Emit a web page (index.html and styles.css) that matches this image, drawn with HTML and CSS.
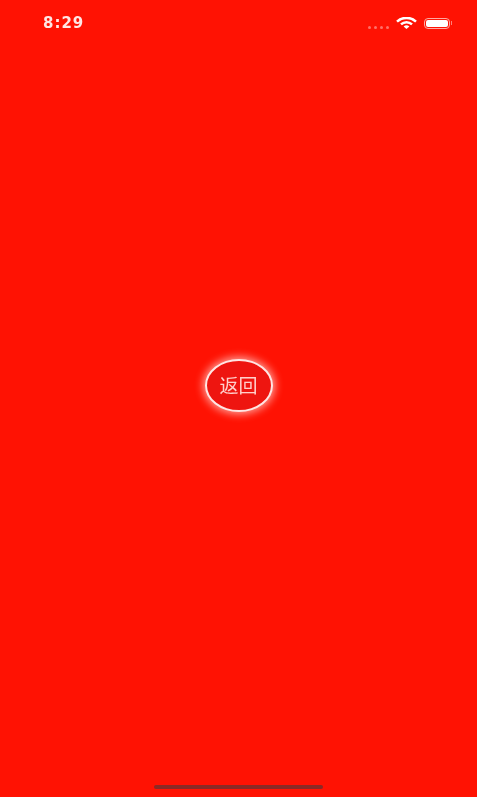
FILE: index.html
```html
<!DOCTYPE html>
<html>
<head>
  <meta charset="UTF-8" />
  <title>返回</title>
  <link rel="stylesheet" href="styles.css">
</head>
<body>

  <div class="status">
    <span class="hora">8:29</span>
    <div class="icones">
      <div class="punts"><i></i><i></i><i></i><i></i></div>
      <svg class="wifi" width="21" height="12" viewBox="0 0 21 12">
        <path d="M1 4.6 A14 14 0 0 1 20 4.6" />
        <path d="M5 7.4 A8 8 0 0 1 16 7.4" />
        <path d="M10.5 12 L7.6 9.4 A4.4 4.4 0 0 1 13.4 9.4 Z" class="ple" />
      </svg>
      <div class="bateria"><div class="carrega"></div></div>
      <div class="pol"></div>
    </div>
  </div>

  <div class="centre">
    <button class="tornar">返回</button>
  </div>

  <div class="peu">
    <div class="barra"></div>
  </div>

</body>
</html>
```

FILE: styles.css
```css
html, body {
  height: 100%;
}
body {
  margin: 0;
  background-color: #ff1203;
  font-family: "Liberation Sans", "Noto Sans CJK SC", sans-serif;
  display: flex;
  flex-direction: column;
  overflow: hidden;
}
.status {
  height: 46px;
  display: flex;
  justify-content: space-between;
  align-items: center;
  padding: 0 25px 0 43px;
  box-sizing: border-box;
}
.hora {
  color: #ffe6e4;
  font-family: "DejaVu Sans", sans-serif;
  font-size: 15px;
  font-weight: bold;
  letter-spacing: 1px;
  filter: blur(0.4px);
}
.icones {
  display: flex;
  align-items: center;
  filter: blur(0.4px);
}
.punts {
  display: flex;
  gap: 3px;
  margin-top: 8px;
  margin-right: 7px;
}
.punts i {
  width: 3px;
  height: 3px;
  border-radius: 50%;
  background-color: #ff7068;
}
.wifi {
  margin-right: 7px;
}
.wifi path {
  fill: none;
  stroke: #fff;
  stroke-width: 2.5;
}
.wifi .ple {
  fill: #fff;
  stroke: none;
}
.bateria {
  width: 26px;
  height: 11px;
  box-sizing: border-box;
  border: 1px solid #ffa8a2;
  border-radius: 4px;
  padding: 1px;
}
.carrega {
  height: 100%;
  background-color: #fff;
  border-radius: 2px;
}
.pol {
  width: 1px;
  height: 4px;
  margin-left: 1px;
  background-color: #ff8078;
}
.centre {
  flex: 1;
  display: flex;
  justify-content: center;
  align-items: center;
  padding-bottom: 48px;
}
.tornar {
  width: 68px;
  height: 53px;
  padding: 0 0 2px;
  border: 2px solid #ffe6e4;
  border-radius: 50%;
  background-color: #ee1510;
  color: #ffd0cc;
  font-family: "Noto Sans CJK SC", sans-serif;
  font-size: 19px;
  box-shadow: 0 0 9px 2px rgba(255, 225, 220, 0.7);
  filter: blur(0.4px);
}
.peu {
  height: 24px;
  display: flex;
  justify-content: center;
}
.barra {
  width: 169px;
  height: 4px;
  margin-top: 12px;
  border-radius: 2px;
  background-color: #8a2a26;
  filter: blur(0.5px);
}
```
